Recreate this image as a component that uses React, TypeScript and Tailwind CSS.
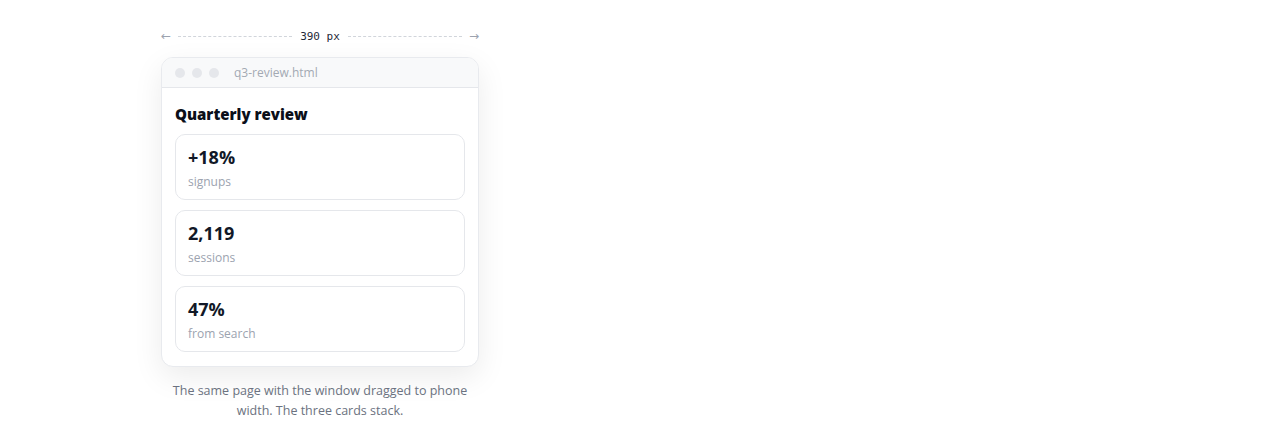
import React from "react";

const cards = [
  { value: "+18%", label: "signups" },
  { value: "2,119", label: "sessions" },
  { value: "47%", label: "from search" },
];

export default function App() {
  return (
    <div
      className="min-h-[447px] bg-white pl-[161px] pt-[28px]"
      style={{ fontFamily: '"Open Sans", sans-serif' }}
    >
      <div className="w-[318px]">
        <div className="flex h-[16px] items-center text-[#9ca3af]">
          <span
            className="w-[10px] text-[12px] leading-none"
            style={{ fontFamily: '"DejaVu Sans", sans-serif' }}
          >
            ←
          </span>
          <div className="ml-[7px] mr-[6px] flex-1 border-t border-dashed border-[#d1d5db]" />
          <span
            className="px-[2px] text-[11px] leading-none text-[#1f2937]"
            style={{ fontFamily: '"DejaVu Sans Mono", monospace' }}
          >
            390 px
          </span>
          <div className="ml-[6px] mr-[7px] flex-1 border-t border-dashed border-[#d1d5db]" />
          <span
            className="w-[10px] text-right text-[12px] leading-none"
            style={{ fontFamily: '"DejaVu Sans", sans-serif' }}
          >
            →
          </span>
        </div>

        <div className="mt-[13px] overflow-hidden rounded-[12px] border border-[#e8eaee] bg-white shadow-[0_10px_30px_rgba(0,0,0,0.08)]">
          <div className="flex h-[30px] items-center border-b border-[#e5e7eb] bg-[#f8f9fa] pl-[13px]">
            <div className="flex gap-[7px]">
              <span className="h-[10px] w-[10px] rounded-full bg-[#e5e7eb]" />
              <span className="h-[10px] w-[10px] rounded-full bg-[#e5e7eb]" />
              <span className="h-[10px] w-[10px] rounded-full bg-[#e5e7eb]" />
            </div>
            <span className="ml-[15px] pt-[1px] text-[12px] text-[#a3a9b3]">q3-review.html</span>
          </div>
          <div className="px-[13px] pb-[14px] pt-[15px]">
            <h1 className="mb-[9px] text-[15px] font-extrabold leading-[22px] text-[#0b0f19]">
              Quarterly review
            </h1>
            <div className="flex flex-col gap-[10px]">
              {cards.map((c) => (
                <div
                  key={c.label}
                  className="rounded-[10px] border border-[#e5e7eb] px-[12px] pb-[9px] pt-[10px]"
                >
                  <div className="text-[18px] font-bold leading-[24px] text-[#111827]">
                    {c.value}
                  </div>
                  <div className="mt-[5px] text-[12px] leading-[16px] text-[#9ca3af]">
                    {c.label}
                  </div>
                </div>
              ))}
            </div>
          </div>
        </div>

        <p className="mt-[14px] text-center text-[12.5px] leading-[20px] text-[#6b7280]">
          The same page with the window dragged to phone width. The three cards stack.
        </p>
      </div>
    </div>
  );
}
